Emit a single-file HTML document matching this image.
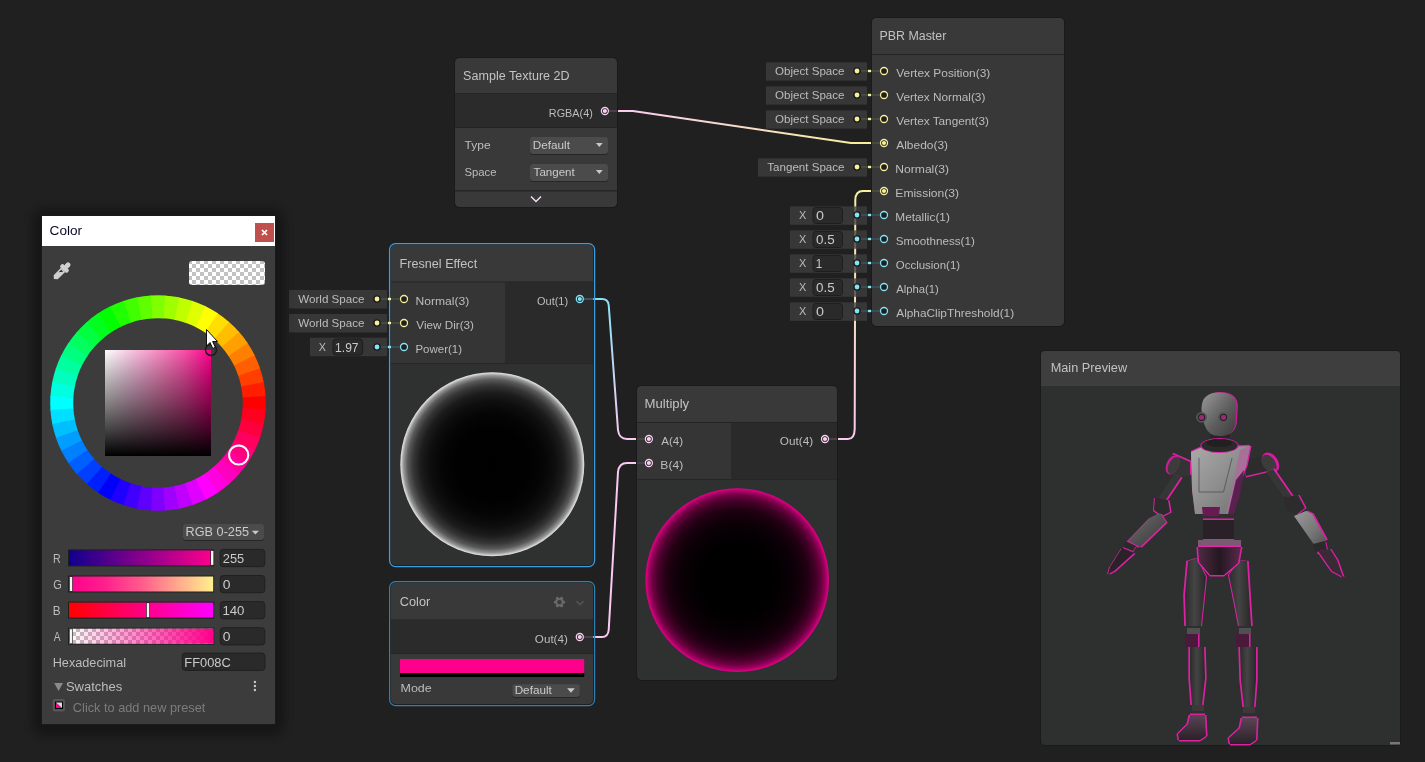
<!DOCTYPE html>
<html><head><meta charset="utf-8"><style>
html,body{margin:0;padding:0;background:#202020;width:1425px;height:762px;overflow:hidden;}
body{position:relative;font-family:"Liberation Sans", sans-serif;}
</style></head><body>
<svg width="1425" height="762" viewBox="0 0 1425 762" font-family='"Liberation Sans", sans-serif' style="position:absolute;left:0;top:0;will-change:transform">
<defs>
<pattern id="chk4" width="8" height="8" patternUnits="userSpaceOnUse"><rect width="8" height="8" fill="#ffffff"/><rect width="4" height="4" fill="#c2c2c2"/><rect x="4" y="4" width="4" height="4" fill="#c2c2c2"/></pattern>
<radialGradient id="fres" cx="0.5" cy="0.5" r="0.5">
<stop offset="0" stop-color="#000"/><stop offset="0.4" stop-color="#010101"/><stop offset="0.55" stop-color="#050505"/><stop offset="0.68" stop-color="#0e0e0e"/>
<stop offset="0.78" stop-color="#1c1c1c"/><stop offset="0.86" stop-color="#363636"/><stop offset="0.92" stop-color="#5a5a5a"/><stop offset="0.965" stop-color="#959595"/>
<stop offset="0.99" stop-color="#d4d4d4"/><stop offset="1" stop-color="#e4e4e4"/></radialGradient>
<radialGradient id="mult" cx="0.5" cy="0.5" r="0.5">
<stop offset="0" stop-color="#000"/><stop offset="0.4" stop-color="#010001"/><stop offset="0.55" stop-color="#070004"/><stop offset="0.68" stop-color="#12000a"/>
<stop offset="0.78" stop-color="#240014"/><stop offset="0.86" stop-color="#440028"/><stop offset="0.92" stop-color="#6c0040"/><stop offset="0.965" stop-color="#a00060"/>
<stop offset="0.99" stop-color="#d4007c"/><stop offset="1" stop-color="#e0008a"/></radialGradient>
<linearGradient id="svw" x1="0" y1="0" x2="1" y2="0"><stop offset="0" stop-color="#fff"/><stop offset="0.25" stop-color="#f6c4e2"/><stop offset="0.5" stop-color="#f68cc2"/><stop offset="0.75" stop-color="#f850a8"/><stop offset="1" stop-color="#ff008c"/></linearGradient>
<linearGradient id="svb" x1="0" y1="0" x2="0" y2="1"><stop offset="0" stop-color="#000" stop-opacity="0"/><stop offset="0.1" stop-color="#000" stop-opacity="0.1"/><stop offset="0.25" stop-color="#000" stop-opacity="0.25"/><stop offset="0.5" stop-color="#000" stop-opacity="0.48"/><stop offset="0.75" stop-color="#000" stop-opacity="0.73"/><stop offset="1" stop-color="#000" stop-opacity="1"/></linearGradient>
<linearGradient id="slR" x1="0" y1="0" x2="1" y2="0"><stop offset="0" stop-color="#10008c"/><stop offset="1" stop-color="#ff008c"/></linearGradient>
<linearGradient id="slG" x1="0" y1="0" x2="1" y2="0"><stop offset="0" stop-color="#ff008c"/><stop offset="0.25" stop-color="#ff208c"/><stop offset="0.5" stop-color="#ff5a8c"/><stop offset="0.75" stop-color="#ffa88c"/><stop offset="1" stop-color="#fff08c"/></linearGradient>
<linearGradient id="slB" x1="0" y1="0" x2="1" y2="0"><stop offset="0" stop-color="#ff0000"/><stop offset="1" stop-color="#ff00ff"/></linearGradient>
<linearGradient id="slA" x1="0" y1="0" x2="1" y2="0"><stop offset="0" stop-color="#ff008c" stop-opacity="0"/><stop offset="1" stop-color="#ff008c" stop-opacity="1"/></linearGradient>
<linearGradient id="w1" gradientUnits="userSpaceOnUse" x1="618" y1="0" x2="871" y2="0"><stop offset="0" stop-color="#fbc9f4"/><stop offset="1" stop-color="#f6f09a"/></linearGradient>
<linearGradient id="w2" gradientUnits="userSpaceOnUse" x1="0" y1="299" x2="0" y2="439"><stop offset="0" stop-color="#84e4f7"/><stop offset="1" stop-color="#fbc9f4"/></linearGradient>
<linearGradient id="w4" gradientUnits="userSpaceOnUse" x1="0" y1="439" x2="0" y2="191"><stop offset="0" stop-color="#fbc9f4"/><stop offset="1" stop-color="#f6f09a"/></linearGradient>
<filter id="shadow" x="-20%" y="-20%" width="140%" height="140%"><feGaussianBlur stdDeviation="5"/></filter>
</defs>
<rect x="0" y="0" width="1425" height="762" rx="0" fill="#202020" />
<g fill="none" stroke-width="2" stroke-linecap="round" stroke-linejoin="round">
<path d="M618 111 L633 111 L851 143 L871 143" stroke="url(#w1)"/>
<path d="M594 299 L602 299 Q608 299 608.7 305 L618 430 Q619 439 627 439 L637 439" stroke="url(#w2)"/>
<path d="M594 637 L602 637 Q608 637 608.7 630 L618 472 Q619 463 627 463 L637 463" stroke="#fbc9f4"/>
<path d="M838 439 L848 439 Q854.5 439 854.7 429 L855.3 200 Q855.5 191 863 191 L871 191" stroke="url(#w4)"/>
</g>
<rect x="454" y="57" width="164" height="151" rx="5" fill="#1a1a1a" />
<clipPath id="cpST"><rect x="455" y="58" width="162" height="149" rx="4.5"/></clipPath>
<g clip-path="url(#cpST)">
<rect x="455" y="58" width="162" height="149" rx="0" fill="#393939" />
<rect x="455" y="93" width="162" height="1" rx="0" fill="#242424" />
<rect x="455" y="94" width="162" height="34" rx="0" fill="#2b2b2b" />
<rect x="455" y="127" width="162" height="1" rx="0" fill="#242424" />
<rect x="455" y="190" width="162" height="1.5" rx="0" fill="#262626" />
</g>
<text x="463.14" y="80" font-size="12.3" fill="#c2c2c2" textLength="106.44" lengthAdjust="spacingAndGlyphs">Sample Texture 2D</text>
<text x="548.83" y="117" font-size="11.5" fill="#bcbcbc" textLength="44.03" lengthAdjust="spacingAndGlyphs">RGBA(4)</text>
<circle cx="604.9" cy="111" r="3.5" fill="#1f1f1f" stroke="#f8d0f2" stroke-width="1.3"/>
<circle cx="604.9" cy="111" r="2.1" fill="#f8d0f2"/>
<path d="M609 111 L617 111" stroke="#4a4048" stroke-width="2"/>
<text x="464.60" y="149" font-size="11.5" fill="#bcbcbc" textLength="25.98" lengthAdjust="spacingAndGlyphs">Type</text>
<text x="464.39" y="175.6" font-size="11.5" fill="#bcbcbc" textLength="32.13" lengthAdjust="spacingAndGlyphs">Space</text>
<rect x="530" y="138" width="78" height="17" rx="3" fill="#262626" />
<rect x="530" y="137" width="78" height="17" rx="3" fill="#4b4b4b" />
<path d="M595.9 143.1 L602.7 143.1 L599.3 147.1 Z" fill="#c8c8c8"/>
<rect x="530" y="165" width="78" height="17" rx="3" fill="#262626" />
<rect x="530" y="164" width="78" height="17" rx="3" fill="#4b4b4b" />
<path d="M595.9 170.1 L602.7 170.1 L599.3 174.1 Z" fill="#c8c8c8"/>
<text x="532.66" y="149" font-size="11.5" fill="#cacaca" textLength="37.24" lengthAdjust="spacingAndGlyphs">Default</text>
<text x="533.61" y="175.6" font-size="11.5" fill="#cacaca" textLength="41.09" lengthAdjust="spacingAndGlyphs">Tangent</text>
<path d="M531 196.5 L536 201.5 L541 196.5" fill="none" stroke="#f0dff0" stroke-width="1.5"/>
<rect x="871" y="17" width="194" height="310" rx="5" fill="#1a1a1a" />
<clipPath id="cpPBR"><rect x="872" y="18" width="192" height="308" rx="4.5"/></clipPath>
<g clip-path="url(#cpPBR)">
<rect x="872" y="18" width="192" height="308" rx="0" fill="#383838" />
<rect x="872" y="18" width="192" height="36" rx="0" fill="#393939" />
<rect x="872" y="54" width="192" height="1" rx="0" fill="#232323" />
</g>
<text x="879.51" y="40.1" font-size="12.3" fill="#c2c2c2" textLength="66.84" lengthAdjust="spacingAndGlyphs">PBR Master</text>
<text x="896.24" y="77" font-size="11.5" fill="#bcbcbc" textLength="94.01" lengthAdjust="spacingAndGlyphs">Vertex Position(3)</text>
<rect x="766" y="62.4" width="101" height="18.2" rx="0" fill="#3e3e3e" fill-opacity="0.78"/>
<text x="774.98" y="75" font-size="11.5" fill="#bcbcbc" textLength="69.58" lengthAdjust="spacingAndGlyphs">Object Space</text>
<circle cx="857" cy="71" r="3.8" fill="#1c1c1c"/><circle cx="857" cy="71" r="2.4" fill="#f6f09a"/>
<path d="M861 71 L880 71" stroke="#4a5244" stroke-width="1.5"/>
<rect x="868" y="69.8" width="3" height="2.4" rx="0" fill="#f6f09a" />
<circle cx="884" cy="71" r="3.5" fill="#1f1f1f" stroke="#f6f09a" stroke-width="1.3"/>
<text x="896.24" y="101" font-size="11.5" fill="#bcbcbc" textLength="89.10" lengthAdjust="spacingAndGlyphs">Vertex Normal(3)</text>
<rect x="766" y="86.4" width="101" height="18.2" rx="0" fill="#3e3e3e" fill-opacity="0.78"/>
<text x="774.98" y="99" font-size="11.5" fill="#bcbcbc" textLength="69.58" lengthAdjust="spacingAndGlyphs">Object Space</text>
<circle cx="857" cy="95" r="3.8" fill="#1c1c1c"/><circle cx="857" cy="95" r="2.4" fill="#f6f09a"/>
<path d="M861 95 L880 95" stroke="#4a5244" stroke-width="1.5"/>
<rect x="868" y="93.8" width="3" height="2.4" rx="0" fill="#f6f09a" />
<circle cx="884" cy="95" r="3.5" fill="#1f1f1f" stroke="#f6f09a" stroke-width="1.3"/>
<text x="896.24" y="125" font-size="11.5" fill="#bcbcbc" textLength="92.77" lengthAdjust="spacingAndGlyphs">Vertex Tangent(3)</text>
<rect x="766" y="110.4" width="101" height="18.2" rx="0" fill="#3e3e3e" fill-opacity="0.78"/>
<text x="774.98" y="123" font-size="11.5" fill="#bcbcbc" textLength="69.58" lengthAdjust="spacingAndGlyphs">Object Space</text>
<circle cx="857" cy="119" r="3.8" fill="#1c1c1c"/><circle cx="857" cy="119" r="2.4" fill="#f6f09a"/>
<path d="M861 119 L880 119" stroke="#4a5244" stroke-width="1.5"/>
<rect x="868" y="117.8" width="3" height="2.4" rx="0" fill="#f6f09a" />
<circle cx="884" cy="119" r="3.5" fill="#1f1f1f" stroke="#f6f09a" stroke-width="1.3"/>
<text x="896.24" y="149" font-size="11.5" fill="#bcbcbc" textLength="51.79" lengthAdjust="spacingAndGlyphs">Albedo(3)</text>
<path d="M872 143 L880 143" stroke="#4a5244" stroke-width="1.5"/>
<circle cx="884" cy="143" r="3.5" fill="#1f1f1f" stroke="#f6f09a" stroke-width="1.3"/>
<circle cx="884" cy="143" r="2.1" fill="#f6f09a"/>
<text x="895.33" y="173" font-size="11.5" fill="#bcbcbc" textLength="53.75" lengthAdjust="spacingAndGlyphs">Normal(3)</text>
<rect x="758" y="158.4" width="109" height="18.2" rx="0" fill="#3e3e3e" fill-opacity="0.78"/>
<text x="767.31" y="171" font-size="11.5" fill="#bcbcbc" textLength="77.23" lengthAdjust="spacingAndGlyphs">Tangent Space</text>
<circle cx="857" cy="167" r="3.8" fill="#1c1c1c"/><circle cx="857" cy="167" r="2.4" fill="#f6f09a"/>
<path d="M861 167 L880 167" stroke="#4a5244" stroke-width="1.5"/>
<rect x="868" y="165.8" width="3" height="2.4" rx="0" fill="#f6f09a" />
<circle cx="884" cy="167" r="3.5" fill="#1f1f1f" stroke="#f6f09a" stroke-width="1.3"/>
<text x="895.33" y="197" font-size="11.5" fill="#bcbcbc" textLength="63.74" lengthAdjust="spacingAndGlyphs">Emission(3)</text>
<path d="M872 191 L880 191" stroke="#4a5244" stroke-width="1.5"/>
<circle cx="884" cy="191" r="3.5" fill="#1f1f1f" stroke="#f6f09a" stroke-width="1.3"/>
<circle cx="884" cy="191" r="2.1" fill="#f6f09a"/>
<text x="895.36" y="221" font-size="11.5" fill="#bcbcbc" textLength="54.48" lengthAdjust="spacingAndGlyphs">Metallic(1)</text>
<rect x="790" y="206.4" width="77" height="18.4" rx="0" fill="#3e3e3e" fill-opacity="0.78"/>
<text x="798.93" y="219" font-size="10.5" fill="#bcbcbc" textLength="7.32" lengthAdjust="spacingAndGlyphs">X</text>
<rect x="813" y="207.5" width="29.5" height="16" rx="3" fill="#2a2a2a" stroke="#1e1e1e" stroke-width="1"/>
<text x="815.93" y="219.8" font-size="12.2" fill="#cacaca" textLength="7.96" lengthAdjust="spacingAndGlyphs">0</text>
<circle cx="857" cy="215" r="3.8" fill="#1c1c1c"/><circle cx="857" cy="215" r="2.4" fill="#84e4f7"/>
<path d="M861 215 L880 215" stroke="#3c5458" stroke-width="1.5"/>
<rect x="868" y="213.8" width="3" height="2.4" rx="0" fill="#84e4f7" />
<circle cx="884" cy="215" r="3.5" fill="#1f1f1f" stroke="#84e4f7" stroke-width="1.3"/>
<text x="895.78" y="245" font-size="11.5" fill="#bcbcbc" textLength="79.04" lengthAdjust="spacingAndGlyphs">Smoothness(1)</text>
<rect x="790" y="230.4" width="77" height="18.4" rx="0" fill="#3e3e3e" fill-opacity="0.78"/>
<text x="798.93" y="243" font-size="10.5" fill="#bcbcbc" textLength="7.32" lengthAdjust="spacingAndGlyphs">X</text>
<rect x="813" y="231.5" width="29.5" height="16" rx="3" fill="#2a2a2a" stroke="#1e1e1e" stroke-width="1"/>
<text x="815.96" y="243.8" font-size="12.2" fill="#cacaca" textLength="18.68" lengthAdjust="spacingAndGlyphs">0.5</text>
<circle cx="857" cy="239" r="3.8" fill="#1c1c1c"/><circle cx="857" cy="239" r="2.4" fill="#84e4f7"/>
<path d="M861 239 L880 239" stroke="#3c5458" stroke-width="1.5"/>
<rect x="868" y="237.8" width="3" height="2.4" rx="0" fill="#84e4f7" />
<circle cx="884" cy="239" r="3.5" fill="#1f1f1f" stroke="#84e4f7" stroke-width="1.3"/>
<text x="895.78" y="269" font-size="11.5" fill="#bcbcbc" textLength="64.34" lengthAdjust="spacingAndGlyphs">Occlusion(1)</text>
<rect x="790" y="254.4" width="77" height="18.4" rx="0" fill="#3e3e3e" fill-opacity="0.78"/>
<text x="798.93" y="267" font-size="10.5" fill="#bcbcbc" textLength="7.32" lengthAdjust="spacingAndGlyphs">X</text>
<rect x="813" y="255.5" width="29.5" height="16" rx="3" fill="#2a2a2a" stroke="#1e1e1e" stroke-width="1"/>
<text x="815.63" y="267.8" font-size="12.2" fill="#cacaca" textLength="6.47" lengthAdjust="spacingAndGlyphs">1</text>
<circle cx="857" cy="263" r="3.8" fill="#1c1c1c"/><circle cx="857" cy="263" r="2.4" fill="#84e4f7"/>
<path d="M861 263 L880 263" stroke="#3c5458" stroke-width="1.5"/>
<rect x="868" y="261.8" width="3" height="2.4" rx="0" fill="#84e4f7" />
<circle cx="884" cy="263" r="3.5" fill="#1f1f1f" stroke="#84e4f7" stroke-width="1.3"/>
<text x="896.24" y="293" font-size="11.5" fill="#bcbcbc" textLength="42.59" lengthAdjust="spacingAndGlyphs">Alpha(1)</text>
<rect x="790" y="278.4" width="77" height="18.4" rx="0" fill="#3e3e3e" fill-opacity="0.78"/>
<text x="798.93" y="291" font-size="10.5" fill="#bcbcbc" textLength="7.32" lengthAdjust="spacingAndGlyphs">X</text>
<rect x="813" y="279.5" width="29.5" height="16" rx="3" fill="#2a2a2a" stroke="#1e1e1e" stroke-width="1"/>
<text x="815.96" y="291.8" font-size="12.2" fill="#cacaca" textLength="18.68" lengthAdjust="spacingAndGlyphs">0.5</text>
<circle cx="857" cy="287" r="3.8" fill="#1c1c1c"/><circle cx="857" cy="287" r="2.4" fill="#84e4f7"/>
<path d="M861 287 L880 287" stroke="#3c5458" stroke-width="1.5"/>
<rect x="868" y="285.8" width="3" height="2.4" rx="0" fill="#84e4f7" />
<circle cx="884" cy="287" r="3.5" fill="#1f1f1f" stroke="#84e4f7" stroke-width="1.3"/>
<text x="896.24" y="317" font-size="11.5" fill="#bcbcbc" textLength="117.93" lengthAdjust="spacingAndGlyphs">AlphaClipThreshold(1)</text>
<rect x="790" y="302.4" width="77" height="18.4" rx="0" fill="#3e3e3e" fill-opacity="0.78"/>
<text x="798.93" y="315" font-size="10.5" fill="#bcbcbc" textLength="7.32" lengthAdjust="spacingAndGlyphs">X</text>
<rect x="813" y="303.5" width="29.5" height="16" rx="3" fill="#2a2a2a" stroke="#1e1e1e" stroke-width="1"/>
<text x="815.93" y="315.8" font-size="12.2" fill="#cacaca" textLength="7.96" lengthAdjust="spacingAndGlyphs">0</text>
<circle cx="857" cy="311" r="3.8" fill="#1c1c1c"/><circle cx="857" cy="311" r="2.4" fill="#84e4f7"/>
<path d="M861 311 L880 311" stroke="#3c5458" stroke-width="1.5"/>
<rect x="868" y="309.8" width="3" height="2.4" rx="0" fill="#84e4f7" />
<circle cx="884" cy="311" r="3.5" fill="#1f1f1f" stroke="#84e4f7" stroke-width="1.3"/>
<rect x="389.6" y="243.6" width="205" height="323" rx="6" fill="none" stroke="#3d9ddc" stroke-width="1.3"/>
<clipPath id="cpFR"><rect x="391" y="245" width="202" height="320" rx="4.5"/></clipPath>
<g clip-path="url(#cpFR)">
<rect x="391" y="245" width="202" height="320" rx="0" fill="#2f3030" />
<rect x="391" y="245" width="202" height="37" rx="0" fill="#393939" />
<rect x="391" y="281.5" width="202" height="1" rx="0" fill="#232323" />
<rect x="391" y="282.5" width="114" height="80.5" rx="0" fill="#353535" />
<rect x="505" y="282.5" width="88" height="80.5" rx="0" fill="#2a2a2a" />
<rect x="391" y="363" width="202" height="1" rx="0" fill="#262626" />
</g>
<text x="399.59" y="268.1" font-size="12.3" fill="#c2c2c2" textLength="77.58" lengthAdjust="spacingAndGlyphs">Fresnel Effect</text>
<text x="415.43" y="305" font-size="11.5" fill="#bcbcbc" textLength="53.75" lengthAdjust="spacingAndGlyphs">Normal(3)</text>
<rect x="289" y="290" width="98" height="18.5" rx="0" fill="#3e3e3e" fill-opacity="0.78"/>
<text x="298.24" y="302.7" font-size="11.5" fill="#bcbcbc" textLength="66.30" lengthAdjust="spacingAndGlyphs">World Space</text>
<circle cx="377" cy="299" r="3.8" fill="#1c1c1c"/><circle cx="377" cy="299" r="2.4" fill="#f6f09a"/>
<path d="M381 299 L400 299" stroke="#4a5244" stroke-width="1.5"/>
<rect x="388" y="297.8" width="3" height="2.4" rx="0" fill="#f6f09a" />
<circle cx="404" cy="299" r="3.5" fill="#1f1f1f" stroke="#f6f09a" stroke-width="1.3"/>
<text x="416.34" y="329" font-size="11.5" fill="#bcbcbc" textLength="57.68" lengthAdjust="spacingAndGlyphs">View Dir(3)</text>
<rect x="289" y="314" width="98" height="18.5" rx="0" fill="#3e3e3e" fill-opacity="0.78"/>
<text x="298.24" y="326.7" font-size="11.5" fill="#bcbcbc" textLength="66.30" lengthAdjust="spacingAndGlyphs">World Space</text>
<circle cx="377" cy="323" r="3.8" fill="#1c1c1c"/><circle cx="377" cy="323" r="2.4" fill="#f6f09a"/>
<path d="M381 323 L400 323" stroke="#4a5244" stroke-width="1.5"/>
<rect x="388" y="321.8" width="3" height="2.4" rx="0" fill="#f6f09a" />
<circle cx="404" cy="323" r="3.5" fill="#1f1f1f" stroke="#f6f09a" stroke-width="1.3"/>
<text x="415.48" y="353" font-size="11.5" fill="#bcbcbc" textLength="46.53" lengthAdjust="spacingAndGlyphs">Power(1)</text>
<rect x="310" y="337.7" width="77" height="18.5" rx="0" fill="#3e3e3e" fill-opacity="0.78"/>
<text x="318.73" y="351" font-size="10.5" fill="#bcbcbc" textLength="7.21" lengthAdjust="spacingAndGlyphs">X</text>
<rect x="333" y="339" width="29.7" height="16" rx="3" fill="#2a2a2a" stroke="#1e1e1e" stroke-width="1"/>
<text x="335.09" y="351.5" font-size="12.2" fill="#cacaca" textLength="23.53" lengthAdjust="spacingAndGlyphs">1.97</text>
<circle cx="377" cy="347" r="3.8" fill="#1c1c1c"/><circle cx="377" cy="347" r="2.4" fill="#84e4f7"/>
<path d="M381 347 L400 347" stroke="#3c5458" stroke-width="1.5"/>
<rect x="388" y="345.8" width="3" height="2.4" rx="0" fill="#84e4f7" />
<circle cx="404" cy="347" r="3.5" fill="#1f1f1f" stroke="#84e4f7" stroke-width="1.3"/>
<text x="537.01" y="305.1" font-size="11.5" fill="#bcbcbc" textLength="31.10" lengthAdjust="spacingAndGlyphs">Out(1)</text>
<circle cx="579.8" cy="299" r="3.5" fill="#1f1f1f" stroke="#84e4f7" stroke-width="1.3"/>
<circle cx="579.8" cy="299" r="2.1" fill="#84e4f7"/>
<path d="M584 299 L593 299" stroke="#3c5458" stroke-width="2"/>
<circle cx="492.3" cy="464.3" r="92" fill="url(#fres)"/>
<rect x="389.6" y="581.6" width="205" height="124" rx="6" fill="none" stroke="#3080b4" stroke-width="1.2"/>
<clipPath id="cpCO"><rect x="391" y="583" width="202" height="121" rx="4.5"/></clipPath>
<g clip-path="url(#cpCO)">
<rect x="391" y="583" width="202" height="121" rx="0" fill="#393939" />
<rect x="391" y="619.5" width="202" height="1" rx="0" fill="#232323" />
<rect x="391" y="620.5" width="202" height="33" rx="0" fill="#2b2b2b" />
<rect x="391" y="653" width="202" height="1" rx="0" fill="#262626" />
</g>
<text x="399.86" y="605.9" font-size="12.3" fill="#c2c2c2" textLength="30.39" lengthAdjust="spacingAndGlyphs">Color</text>
<g transform="translate(559.5 602.1)" fill="#686868"><circle cx="4.10" cy="0.00" r="1.7"/><circle cx="2.05" cy="3.55" r="1.7"/><circle cx="-2.05" cy="3.55" r="1.7"/><circle cx="-4.10" cy="0.00" r="1.7"/><circle cx="-2.05" cy="-3.55" r="1.7"/><circle cx="2.05" cy="-3.55" r="1.7"/><circle r="4.2"/><circle r="2.2" fill="#393939"/></g>
<path d="M576.5 601.2 L580 604.6 L583.5 601.2" fill="none" stroke="#5a5a5a" stroke-width="1.3"/>
<text x="534.88" y="643.1" font-size="11.5" fill="#bcbcbc" textLength="32.97" lengthAdjust="spacingAndGlyphs">Out(4)</text>
<circle cx="579.8" cy="637" r="3.5" fill="#1f1f1f" stroke="#f8d0f2" stroke-width="1.3"/>
<circle cx="579.8" cy="637" r="2.1" fill="#f8d0f2"/>
<path d="M584 637 L593 637" stroke="#4a4048" stroke-width="2"/>
<rect x="400" y="659" width="184.2" height="14" rx="0" fill="#ff008c" />
<rect x="400" y="673" width="184.2" height="4" rx="0" fill="#000" />
<text x="400.50" y="692.2" font-size="11.5" fill="#bcbcbc" textLength="31.18" lengthAdjust="spacingAndGlyphs">Mode</text>
<rect x="512.3" y="685.2" width="67.5" height="12.899999999999977" rx="3" fill="#262626" />
<rect x="512.3" y="684.2" width="67.5" height="12.899999999999977" rx="3" fill="#4b4b4b" />
<path d="M567.1 688.2 L574.8 688.2 L570.95 692.8 Z" fill="#c8c8c8"/>
<text x="514.66" y="693.7" font-size="11.5" fill="#cacaca" textLength="37.14" lengthAdjust="spacingAndGlyphs">Default</text>
<rect x="636" y="385" width="202" height="296" rx="5" fill="#1a1a1a" />
<clipPath id="cpMU"><rect x="637" y="386" width="200" height="294" rx="4.5"/></clipPath>
<g clip-path="url(#cpMU)">
<rect x="637" y="386" width="200" height="294" rx="0" fill="#2f3030" />
<rect x="637" y="386" width="200" height="36" rx="0" fill="#393939" />
<rect x="637" y="422" width="200" height="1" rx="0" fill="#232323" />
<rect x="637" y="423" width="94" height="56" rx="0" fill="#353535" />
<rect x="731" y="423" width="106" height="56" rx="0" fill="#2a2a2a" />
<rect x="637" y="479" width="200" height="1" rx="0" fill="#262626" />
</g>
<text x="644.55" y="408.1" font-size="12.3" fill="#c2c2c2" textLength="44.62" lengthAdjust="spacingAndGlyphs">Multiply</text>
<text x="661.24" y="445" font-size="11.5" fill="#bcbcbc" textLength="21.90" lengthAdjust="spacingAndGlyphs">A(4)</text>
<path d="M637 439 L645 439" stroke="#4a4048" stroke-width="2"/>
<circle cx="648.9" cy="439" r="3.5" fill="#1f1f1f" stroke="#f8d0f2" stroke-width="1.3"/>
<circle cx="648.9" cy="439" r="2.1" fill="#f8d0f2"/>
<text x="660.33" y="469" font-size="11.5" fill="#bcbcbc" textLength="22.84" lengthAdjust="spacingAndGlyphs">B(4)</text>
<path d="M637 463 L645 463" stroke="#4a4048" stroke-width="2"/>
<circle cx="648.9" cy="463" r="3.5" fill="#1f1f1f" stroke="#f8d0f2" stroke-width="1.3"/>
<circle cx="648.9" cy="463" r="2.1" fill="#f8d0f2"/>
<text x="779.87" y="445" font-size="11.5" fill="#bcbcbc" textLength="33.28" lengthAdjust="spacingAndGlyphs">Out(4)</text>
<circle cx="825" cy="439" r="3.5" fill="#1f1f1f" stroke="#f8d0f2" stroke-width="1.3"/>
<circle cx="825" cy="439" r="2.1" fill="#f8d0f2"/>
<path d="M829 439 L837 439" stroke="#4a4048" stroke-width="2"/>
<circle cx="737.2" cy="580.1" r="91.8" fill="url(#mult)"/>
<rect x="1040" y="350" width="361" height="396" rx="5" fill="#1a1a1a" />
<clipPath id="cpMP"><rect x="1041" y="351" width="359" height="394" rx="4"/></clipPath>
<g clip-path="url(#cpMP)">
<rect x="1041" y="351" width="359" height="394" rx="0" fill="#2e2f2f" />
<rect x="1041" y="351" width="359" height="35" rx="0" fill="#3e3e3e" />
</g>
<rect x="1390" y="742" width="10" height="2.5" rx="0" fill="#777" />
<text x="1050.68" y="372" font-size="12.3" fill="#c2c2c2" textLength="76.48" lengthAdjust="spacingAndGlyphs">Main Preview</text>
<g id="robot" stroke-linejoin="round">
<defs>
<linearGradient id="rbLimb" x1="0" y1="0" x2="1" y2="0"><stop offset="0" stop-color="#2c2c2c"/><stop offset="0.45" stop-color="#444"/><stop offset="1" stop-color="#282828"/></linearGradient>
<linearGradient id="rbFore" x1="0" y1="0" x2="1" y2="1"><stop offset="0" stop-color="#747474"/><stop offset="0.5" stop-color="#525252"/><stop offset="1" stop-color="#383838"/></linearGradient>
<linearGradient id="rbForeR" x1="0" y1="0" x2="1" y2="1"><stop offset="0" stop-color="#9a9a9a"/><stop offset="0.6" stop-color="#767676"/><stop offset="1" stop-color="#505050"/></linearGradient>
<linearGradient id="rbChest" x1="0" y1="0" x2="1" y2="1"><stop offset="0" stop-color="#aaaaaa"/><stop offset="0.5" stop-color="#8e8e8e"/><stop offset="1" stop-color="#6e6e6e"/></linearGradient>
<linearGradient id="rbHead" x1="0" y1="0" x2="1" y2="1"><stop offset="0" stop-color="#9a9a9a"/><stop offset="0.55" stop-color="#5e5e5e"/><stop offset="1" stop-color="#3a3a3a"/></linearGradient>
<linearGradient id="rbPelvis" x1="0" y1="0" x2="1" y2="0"><stop offset="0" stop-color="#4e2a44"/><stop offset="0.5" stop-color="#241820"/><stop offset="1" stop-color="#5a2a4e"/></linearGradient>
<linearGradient id="rbFoot" x1="0" y1="0" x2="0" y2="1"><stop offset="0" stop-color="#5a4454"/><stop offset="1" stop-color="#2a2228"/></linearGradient>
</defs>
<path d="M1166 462 L1172 454 L1190 462 L1190 476 L1176 477 L1166 470 Z" fill="#f020b0" fill-opacity="0.9" transform="translate(1.30 -1.30)"/>
<path d="M1166 462 L1172 454 L1190 462 L1190 476 L1176 477 L1166 470 Z" fill="#343434"/>
<ellipse cx="1172.5" cy="465" rx="6" ry="10" transform="rotate(25 1172.5 465)" fill="#e01aa6" opacity="0.9"/>
<ellipse cx="1173.5" cy="465.5" rx="5" ry="9" transform="rotate(25 1173.5 465.5)" fill="#3c3c3c"/>
<path d="M1174 474 L1181 477 L1163 504 L1157 500 Z" fill="#f020b0" fill-opacity="0.9" transform="translate(1.69 0.65)"/>
<path d="M1174 474 L1181 477 L1163 504 L1157 500 Z" fill="#363636"/>
<path d="M1155 497 L1168 500 L1170 512 L1162 516 L1154 510 Z" fill="#f020b0" fill-opacity="0.9" transform="translate(1.69 0.39)"/>
<path d="M1155 497 L1168 500 L1170 512 L1162 516 L1154 510 Z" fill="#f020b0" fill-opacity="0.9" transform="translate(-1.04 1.04)"/>
<path d="M1155 497 L1168 500 L1170 512 L1162 516 L1154 510 Z" fill="#2c2c2c"/>
<path d="M1150 518 L1160 513 L1166 522 L1140 547 L1128 541 Z" fill="#f020b0" fill-opacity="0.9" transform="translate(1.69 0.65)"/>
<path d="M1150 518 L1160 513 L1166 522 L1140 547 L1128 541 Z" fill="#f020b0" fill-opacity="0.9" transform="translate(-1.56 0.78)"/>
<path d="M1150 518 L1160 513 L1166 522 L1140 547 L1128 541 Z" fill="url(#rbFore)"/>
<path d="M1125 541 L1136 546 L1133 551 L1123 547 Z" fill="#f020b0" fill-opacity="0.9" transform="translate(0.00 1.30)"/>
<path d="M1125 541 L1136 546 L1133 551 L1123 547 Z" fill="#2a2a2a"/>
<path d="M1122 548 L1134 553 L1114 571 L1108 574 L1110 567 Z" fill="#f020b0" fill-opacity="0.9" transform="translate(1.56 0.78)"/>
<path d="M1122 548 L1134 553 L1114 571 L1108 574 L1110 567 Z" fill="#f020b0" fill-opacity="0.9" transform="translate(-1.04 0.39)"/>
<path d="M1122 548 L1134 553 L1114 571 L1108 574 L1110 567 Z" fill="#2a2228"/>
<path d="M1243 462 L1262 456 L1272 470 L1246 476 Z" fill="#f020b0" fill-opacity="0.9" transform="translate(0.00 1.56)"/>
<path d="M1243 462 L1262 456 L1272 470 L1246 476 Z" fill="#2c2c2c"/>
<ellipse cx="1270.5" cy="462.5" rx="7.5" ry="11" transform="rotate(-35 1270.5 462.5)" fill="#e01aa6" opacity="0.95"/>
<ellipse cx="1269" cy="463.5" rx="6.3" ry="9.8" transform="rotate(-35 1269 463.5)" fill="#3c3c3c"/>
<path d="M1266 472 L1273 469 L1293 498 L1287 502 Z" fill="#f020b0" fill-opacity="0.9" transform="translate(1.69 -0.65)"/>
<path d="M1266 472 L1273 469 L1293 498 L1287 502 Z" fill="#363636"/>
<path d="M1284 497 L1298 495 L1305 508 L1297 514 L1286 510 Z" fill="#f020b0" fill-opacity="0.9" transform="translate(1.69 0.00)"/>
<path d="M1284 497 L1298 495 L1305 508 L1297 514 L1286 510 Z" fill="#2c2c2c"/>
<path d="M1294 516 L1306 511 L1312 514 L1326 540 L1315 546 Z" fill="#f020b0" fill-opacity="0.9" transform="translate(1.82 -0.52)"/>
<path d="M1294 516 L1306 511 L1312 514 L1326 540 L1315 546 Z" fill="url(#rbForeR)"/>
<path d="M1313 544 L1325 541 L1327 550 L1316 553 Z" fill="#f020b0" fill-opacity="0.9" transform="translate(1.30 1.04)"/>
<path d="M1313 544 L1325 541 L1327 550 L1316 553 Z" fill="#2a2a2a"/>
<path d="M1318 551 L1330 549 L1337 560 L1343 577 L1332 571 Z" fill="#f020b0" fill-opacity="0.9" transform="translate(1.56 0.00)"/>
<path d="M1318 551 L1330 549 L1337 560 L1343 577 L1332 571 Z" fill="#f020b0" fill-opacity="0.9" transform="translate(-1.04 0.65)"/>
<path d="M1318 551 L1330 549 L1337 560 L1343 577 L1332 571 Z" fill="#3a2a36"/>
<path d="M1188 561 L1197 558 L1206 577 L1201 626 L1186 626 L1185 595 Z" fill="#f020b0" fill-opacity="0.9" transform="translate(-1.82 0.00)"/>
<path d="M1188 561 L1197 558 L1206 577 L1201 626 L1186 626 L1185 595 Z" fill="#f020b0" fill-opacity="0.9" transform="translate(1.04 0.00)"/>
<path d="M1188 561 L1197 558 L1206 577 L1201 626 L1186 626 L1185 595 Z" fill="url(#rbLimb)"/>
<path d="M1229 575 L1239 560 L1247 561 L1251 626 L1239 626 L1234 600 Z" fill="#f020b0" fill-opacity="0.9" transform="translate(1.82 0.00)"/>
<path d="M1229 575 L1239 560 L1247 561 L1251 626 L1239 626 L1234 600 Z" fill="#f020b0" fill-opacity="0.9" transform="translate(-1.04 0.00)"/>
<path d="M1229 575 L1239 560 L1247 561 L1251 626 L1239 626 L1234 600 Z" fill="url(#rbLimb)"/>
<path d="M1187 628 L1200 628 L1200 634 L1187 634 Z" fill="#505050"/>
<path d="M1239 628 L1251 628 L1251 634 L1239 634 Z" fill="#505050"/>
<path d="M1185 634 L1198 634 L1198 647 L1185 647 Z" fill="#f020b0" fill-opacity="0.9" transform="translate(1.56 0.00)"/>
<path d="M1185 634 L1198 634 L1198 647 L1185 647 Z" fill="#4a1a3a"/>
<path d="M1236 634 L1249 634 L1249 648 L1236 648 Z" fill="#f020b0" fill-opacity="0.9" transform="translate(1.56 0.00)"/>
<path d="M1236 634 L1249 634 L1249 648 L1236 648 Z" fill="#4a1a3a"/>
<path d="M1190 647 L1204 647 L1205 678 L1202 705 L1192 705 L1190 678 Z" fill="#f020b0" fill-opacity="0.9" transform="translate(1.69 0.00)"/>
<path d="M1190 647 L1204 647 L1205 678 L1202 705 L1192 705 L1190 678 Z" fill="#f020b0" fill-opacity="0.9" transform="translate(-1.69 0.00)"/>
<path d="M1190 647 L1204 647 L1205 678 L1202 705 L1192 705 L1190 678 Z" fill="url(#rbLimb)"/>
<path d="M1240 647 L1256 647 L1256 680 L1254 707 L1244 707 L1241 680 Z" fill="#f020b0" fill-opacity="0.9" transform="translate(1.69 0.00)"/>
<path d="M1240 647 L1256 647 L1256 680 L1254 707 L1244 707 L1241 680 Z" fill="#f020b0" fill-opacity="0.9" transform="translate(-1.69 0.00)"/>
<path d="M1240 647 L1256 647 L1256 680 L1254 707 L1244 707 L1241 680 Z" fill="url(#rbLimb)"/>
<path d="M1192 705 L1204 705 L1204 711 L1192 711 Z" fill="#3a3a3a"/>
<path d="M1243 707 L1255 707 L1255 713 L1243 713 Z" fill="#3a3a3a"/>
<path d="M1190 715 L1205 715 L1206 736 L1200 740 L1179 740 L1178 734 L1188 724 Z" fill="#f020b0" fill-opacity="0.9" transform="translate(1.56 0.00)"/>
<path d="M1190 715 L1205 715 L1206 736 L1200 740 L1179 740 L1178 734 L1188 724 Z" fill="#f020b0" fill-opacity="0.9" transform="translate(-1.56 0.00)"/>
<path d="M1190 715 L1205 715 L1206 736 L1200 740 L1179 740 L1178 734 L1188 724 Z" fill="#f020b0" fill-opacity="0.9" transform="translate(0.00 1.56)"/>
<path d="M1190 715 L1205 715 L1206 736 L1200 740 L1179 740 L1178 734 L1188 724 Z" fill="#f020b0" fill-opacity="0.9" transform="translate(0.00 -1.56)"/>
<path d="M1190 715 L1205 715 L1206 736 L1200 740 L1179 740 L1178 734 L1188 724 Z" fill="url(#rbFoot)"/>
<path d="M1242 718 L1257 718 L1256 740 L1250 744 L1230 744 L1229 738 L1240 728 Z" fill="#f020b0" fill-opacity="0.9" transform="translate(1.56 0.00)"/>
<path d="M1242 718 L1257 718 L1256 740 L1250 744 L1230 744 L1229 738 L1240 728 Z" fill="#f020b0" fill-opacity="0.9" transform="translate(-1.56 0.00)"/>
<path d="M1242 718 L1257 718 L1256 740 L1250 744 L1230 744 L1229 738 L1240 728 Z" fill="#f020b0" fill-opacity="0.9" transform="translate(0.00 1.56)"/>
<path d="M1242 718 L1257 718 L1256 740 L1250 744 L1230 744 L1229 738 L1240 728 Z" fill="#f020b0" fill-opacity="0.9" transform="translate(0.00 -1.56)"/>
<path d="M1242 718 L1257 718 L1256 740 L1250 744 L1230 744 L1229 738 L1240 728 Z" fill="url(#rbFoot)"/>
<path d="M1203 520 L1234 520 L1234 539 L1203 539 Z" fill="#f020b0" fill-opacity="0.9" transform="translate(0.00 1.56)"/>
<path d="M1203 520 L1234 520 L1234 539 L1203 539 Z" fill="#f020b0" fill-opacity="0.9" transform="translate(0.00 -1.56)"/>
<path d="M1203 520 L1234 520 L1234 539 L1203 539 Z" fill="#2a2028"/>
<path d="M1198 540 L1241 540 L1241 547 L1198 547 Z" fill="#7a5a70"/>
<path d="M1198 547 L1241 547 L1238 563 L1224 575 L1210 575 L1199 562 Z" fill="#f020b0" fill-opacity="0.9" transform="translate(1.56 0.00)"/>
<path d="M1198 547 L1241 547 L1238 563 L1224 575 L1210 575 L1199 562 Z" fill="#f020b0" fill-opacity="0.9" transform="translate(-1.56 0.00)"/>
<path d="M1198 547 L1241 547 L1238 563 L1224 575 L1210 575 L1199 562 Z" fill="#f020b0" fill-opacity="0.9" transform="translate(0.00 1.56)"/>
<path d="M1198 547 L1241 547 L1238 563 L1224 575 L1210 575 L1199 562 Z" fill="#f020b0" fill-opacity="0.9" transform="translate(0.00 -1.56)"/>
<path d="M1198 547 L1241 547 L1238 563 L1224 575 L1210 575 L1199 562 Z" fill="url(#rbPelvis)"/>
<path d="M1210 432 L1230 432 L1228 448 L1212 448 Z" fill="#262626"/>
<path d="M1191 452 L1200 448 L1250 446 L1246 466 L1240 480 L1232 514 L1195 514 L1192 490 Z" fill="#f020b0" fill-opacity="0.9" transform="translate(1.56 0.00)"/>
<path d="M1191 452 L1200 448 L1250 446 L1246 466 L1240 480 L1232 514 L1195 514 L1192 490 Z" fill="#f020b0" fill-opacity="0.9" transform="translate(0.00 -1.30)"/>
<path d="M1191 452 L1200 448 L1250 446 L1246 466 L1240 480 L1232 514 L1195 514 L1192 490 Z" fill="url(#rbChest)"/>
<path d="M1240 450 L1250 446 L1246 466 L1240 480 L1232 514 L1226 514 L1234 480 Z" fill="#a87098"/>
<path d="M1236 480 L1244 470 L1240 495 L1234 514 L1228 514 Z" fill="#5a2050"/>
<path d="M1199 458 L1199 492 L1223.5 492 L1232 458" fill="none" stroke="#505050" stroke-width="0.8"/>
<path d="M1202 507 L1220 507 L1219 516 L1203 516 Z" fill="#6a1a52"/>
<ellipse cx="1219.5" cy="445.5" rx="19.2" ry="7.6" fill="#e01aa6" opacity="0.9"/>
<ellipse cx="1219.5" cy="445.5" rx="18" ry="6.6" fill="#2a2a2a"/>
<ellipse cx="1219.5" cy="443" rx="13" ry="4" fill="#202020"/>
<path d="M1201.5 408 Q1202 392.5 1219 392.5 Q1237 392.5 1236.5 408 L1235.5 424 Q1233 436 1220 436 Q1208 436 1205 426 L1202 418 Z" fill="#e01aa6" opacity="0.9" transform="translate(1.3 -0.6)"/>
<path d="M1201.5 408 Q1202 392.5 1219 392.5 Q1237 392.5 1236.5 408 L1235.5 424 Q1233 436 1220 436 Q1208 436 1205 426 L1202 418 Z" fill="url(#rbHead)"/>
<circle cx="1201.5" cy="417.3" r="5.4" fill="#555"/><circle cx="1201.5" cy="417.3" r="3.6" fill="#2a1a26"/><circle cx="1201.5" cy="417.3" r="2.6" fill="#9a2a72"/>
<circle cx="1223.5" cy="417.3" r="5.4" fill="#555"/><circle cx="1223.5" cy="417.3" r="3.6" fill="#2a1a26"/><circle cx="1223.5" cy="417.3" r="2.6" fill="#9a2a72"/>
</g>
<rect x="32" y="208" width="253" height="528" rx="14" fill="#000" opacity="0.3" filter="url(#shadow)"/>
<rect x="41" y="215" width="235" height="510" rx="0" fill="#1a1a1a" />
<rect x="42" y="216" width="233" height="508" rx="0" fill="#3c3c3c" />
<rect x="42" y="216" width="233" height="30" rx="0" fill="#ffffff" />
<text x="49.62" y="235.1" font-size="13.6" fill="#0a0a28" textLength="32.55" lengthAdjust="spacingAndGlyphs">Color</text>
<rect x="255" y="223" width="19" height="19" rx="0" fill="#c0504e" />
<path d="M262 230 L267 235 M267 230 L262 235" stroke="#fff" stroke-width="1.7"/>
<g transform="translate(61.8 271.1) rotate(-45)" fill="#d0d0d0"><path d="M-11.2 0 L-8.6 -2.9 L1.8 -2.9 L1.8 2.9 L-8.6 2.9 Z"/><rect x="1.6" y="-5" width="4.4" height="10" rx="1.8"/><rect x="5" y="-2.4" width="6.2" height="4.8" rx="2.2"/><path d="M-3.2 -1.4 L0.6 -1.4 L0.6 1.4 Z" fill="#2a2a2a"/></g>
<rect x="189" y="261" width="76" height="24" rx="3" fill="url(#chk4)" />
<path d="M265.57 410.05 A107.8 107.8 0 0 0 265.52 395.20 L242.58 396.86 A84.8 84.8 0 0 1 242.62 408.55 Z" fill="#ff0000"/>
<path d="M265.57 395.95 A107.8 107.8 0 0 0 263.58 381.23 L241.05 385.88 A84.8 84.8 0 0 1 242.62 397.45 Z" fill="#ff1f00"/>
<path d="M263.73 381.97 A107.8 107.8 0 0 0 259.83 367.64 L238.11 375.18 A84.8 84.8 0 0 1 241.17 386.46 Z" fill="#ff3f00"/>
<path d="M260.08 368.35 A107.8 107.8 0 0 0 254.35 354.65 L233.79 364.96 A84.8 84.8 0 0 1 238.30 375.74 Z" fill="#ff5f00"/>
<path d="M254.68 355.32 A107.8 107.8 0 0 0 247.21 342.49 L228.18 355.40 A84.8 84.8 0 0 1 234.05 365.49 Z" fill="#ff7f00"/>
<path d="M247.63 343.11 A107.8 107.8 0 0 0 238.55 331.36 L221.36 346.64 A84.8 84.8 0 0 1 228.51 355.89 Z" fill="#ff9f00"/>
<path d="M239.05 331.92 A107.8 107.8 0 0 0 228.51 321.46 L213.47 338.86 A84.8 84.8 0 0 1 221.76 347.09 Z" fill="#ffbf00"/>
<path d="M229.08 321.95 A107.8 107.8 0 0 0 217.26 312.95 L204.62 332.16 A84.8 84.8 0 0 1 213.91 339.24 Z" fill="#ffdf00"/>
<path d="M217.89 313.37 A107.8 107.8 0 0 0 205.00 305.99 L194.97 326.69 A84.8 84.8 0 0 1 205.11 332.49 Z" fill="#ffff00"/>
<path d="M205.68 306.32 A107.8 107.8 0 0 0 191.94 300.68 L184.70 322.51 A84.8 84.8 0 0 1 195.51 326.95 Z" fill="#dfff00"/>
<path d="M192.65 300.92 A107.8 107.8 0 0 0 178.29 297.13 L173.96 319.72 A84.8 84.8 0 0 1 185.26 322.70 Z" fill="#bfff00"/>
<path d="M179.03 297.27 A107.8 107.8 0 0 0 164.30 295.38 L162.96 318.34 A84.8 84.8 0 0 1 174.54 319.83 Z" fill="#9fff00"/>
<path d="M165.05 295.43 A107.8 107.8 0 0 0 150.20 295.48 L151.86 318.42 A84.8 84.8 0 0 1 163.55 318.38 Z" fill="#7fff00"/>
<path d="M150.95 295.43 A107.8 107.8 0 0 0 136.23 297.42 L140.88 319.95 A84.8 84.8 0 0 1 152.45 318.38 Z" fill="#5fff00"/>
<path d="M136.97 297.27 A107.8 107.8 0 0 0 122.64 301.17 L130.18 322.89 A84.8 84.8 0 0 1 141.46 319.83 Z" fill="#3fff00"/>
<path d="M123.35 300.92 A107.8 107.8 0 0 0 109.65 306.65 L119.96 327.21 A84.8 84.8 0 0 1 130.74 322.70 Z" fill="#1fff00"/>
<path d="M110.32 306.32 A107.8 107.8 0 0 0 97.49 313.79 L110.40 332.82 A84.8 84.8 0 0 1 120.49 326.95 Z" fill="#00ff00"/>
<path d="M98.11 313.37 A107.8 107.8 0 0 0 86.36 322.45 L101.64 339.64 A84.8 84.8 0 0 1 110.89 332.49 Z" fill="#00ff1f"/>
<path d="M86.92 321.95 A107.8 107.8 0 0 0 76.46 332.49 L93.86 347.53 A84.8 84.8 0 0 1 102.09 339.24 Z" fill="#00ff3f"/>
<path d="M76.95 331.92 A107.8 107.8 0 0 0 67.95 343.74 L87.16 356.38 A84.8 84.8 0 0 1 94.24 347.09 Z" fill="#00ff5f"/>
<path d="M68.37 343.11 A107.8 107.8 0 0 0 60.99 356.00 L81.69 366.03 A84.8 84.8 0 0 1 87.49 355.89 Z" fill="#00ff7f"/>
<path d="M61.32 355.32 A107.8 107.8 0 0 0 55.68 369.06 L77.51 376.30 A84.8 84.8 0 0 1 81.95 365.49 Z" fill="#00ff9f"/>
<path d="M55.92 368.35 A107.8 107.8 0 0 0 52.13 382.71 L74.72 387.04 A84.8 84.8 0 0 1 77.70 375.74 Z" fill="#00ffbf"/>
<path d="M52.27 381.97 A107.8 107.8 0 0 0 50.38 396.70 L73.34 398.04 A84.8 84.8 0 0 1 74.83 386.46 Z" fill="#00ffdf"/>
<path d="M50.43 395.95 A107.8 107.8 0 0 0 50.48 410.80 L73.42 409.14 A84.8 84.8 0 0 1 73.38 397.45 Z" fill="#00ffff"/>
<path d="M50.43 410.05 A107.8 107.8 0 0 0 52.42 424.77 L74.95 420.12 A84.8 84.8 0 0 1 73.38 408.55 Z" fill="#00dfff"/>
<path d="M52.27 424.03 A107.8 107.8 0 0 0 56.17 438.36 L77.89 430.82 A84.8 84.8 0 0 1 74.83 419.54 Z" fill="#00bfff"/>
<path d="M55.92 437.65 A107.8 107.8 0 0 0 61.65 451.35 L82.21 441.04 A84.8 84.8 0 0 1 77.70 430.26 Z" fill="#009fff"/>
<path d="M61.32 450.68 A107.8 107.8 0 0 0 68.79 463.51 L87.82 450.60 A84.8 84.8 0 0 1 81.95 440.51 Z" fill="#007fff"/>
<path d="M68.37 462.89 A107.8 107.8 0 0 0 77.45 474.64 L94.64 459.36 A84.8 84.8 0 0 1 87.49 450.11 Z" fill="#005fff"/>
<path d="M76.95 474.08 A107.8 107.8 0 0 0 87.49 484.54 L102.53 467.14 A84.8 84.8 0 0 1 94.24 458.91 Z" fill="#003fff"/>
<path d="M86.92 484.05 A107.8 107.8 0 0 0 98.74 493.05 L111.38 473.84 A84.8 84.8 0 0 1 102.09 466.76 Z" fill="#001fff"/>
<path d="M98.11 492.63 A107.8 107.8 0 0 0 111.00 500.01 L121.03 479.31 A84.8 84.8 0 0 1 110.89 473.51 Z" fill="#0000ff"/>
<path d="M110.32 499.68 A107.8 107.8 0 0 0 124.06 505.32 L131.30 483.49 A84.8 84.8 0 0 1 120.49 479.05 Z" fill="#1f00ff"/>
<path d="M123.35 505.08 A107.8 107.8 0 0 0 137.71 508.87 L142.04 486.28 A84.8 84.8 0 0 1 130.74 483.30 Z" fill="#3f00ff"/>
<path d="M136.97 508.73 A107.8 107.8 0 0 0 151.70 510.62 L153.04 487.66 A84.8 84.8 0 0 1 141.46 486.17 Z" fill="#5f00ff"/>
<path d="M150.95 510.57 A107.8 107.8 0 0 0 165.80 510.52 L164.14 487.58 A84.8 84.8 0 0 1 152.45 487.62 Z" fill="#7f00ff"/>
<path d="M165.05 510.57 A107.8 107.8 0 0 0 179.77 508.58 L175.12 486.05 A84.8 84.8 0 0 1 163.55 487.62 Z" fill="#9f00ff"/>
<path d="M179.03 508.73 A107.8 107.8 0 0 0 193.36 504.83 L185.82 483.11 A84.8 84.8 0 0 1 174.54 486.17 Z" fill="#bf00ff"/>
<path d="M192.65 505.08 A107.8 107.8 0 0 0 206.35 499.35 L196.04 478.79 A84.8 84.8 0 0 1 185.26 483.30 Z" fill="#df00ff"/>
<path d="M205.68 499.68 A107.8 107.8 0 0 0 218.51 492.21 L205.60 473.18 A84.8 84.8 0 0 1 195.51 479.05 Z" fill="#ff00ff"/>
<path d="M217.89 492.63 A107.8 107.8 0 0 0 229.64 483.55 L214.36 466.36 A84.8 84.8 0 0 1 205.11 473.51 Z" fill="#ff00df"/>
<path d="M229.08 484.05 A107.8 107.8 0 0 0 239.54 473.51 L222.14 458.47 A84.8 84.8 0 0 1 213.91 466.76 Z" fill="#ff00bf"/>
<path d="M239.05 474.08 A107.8 107.8 0 0 0 248.05 462.26 L228.84 449.62 A84.8 84.8 0 0 1 221.76 458.91 Z" fill="#ff009f"/>
<path d="M247.63 462.89 A107.8 107.8 0 0 0 255.01 450.00 L234.31 439.97 A84.8 84.8 0 0 1 228.51 450.11 Z" fill="#ff007f"/>
<path d="M254.68 450.68 A107.8 107.8 0 0 0 260.32 436.94 L238.49 429.70 A84.8 84.8 0 0 1 234.05 440.51 Z" fill="#ff005f"/>
<path d="M260.08 437.65 A107.8 107.8 0 0 0 263.87 423.29 L241.28 418.96 A84.8 84.8 0 0 1 238.30 430.26 Z" fill="#ff003f"/>
<path d="M263.73 424.03 A107.8 107.8 0 0 0 265.62 409.30 L242.66 407.96 A84.8 84.8 0 0 1 241.17 419.54 Z" fill="#ff001f"/>
<rect x="105" y="350" width="106" height="106" rx="0" fill="url(#svw)" />
<rect x="105" y="350" width="106" height="106" rx="0" fill="url(#svb)" />
<circle cx="211" cy="350" r="5.5" fill="none" stroke="#1c1c1c" stroke-width="1.5"/>
<circle cx="238.7" cy="455" r="9.6" fill="none" stroke="#fff" stroke-width="2"/>
<path d="M206.5 329.5 L206.5 346 L210 342.5 L212.8 348.5 L215.3 347.3 L212.6 341.5 L217.5 341.5 Z" fill="#fff" stroke="#000" stroke-width="0.9"/>
<rect x="183" y="525" width="81" height="16" rx="3" fill="#262626" />
<rect x="183" y="524" width="81" height="16" rx="3" fill="#4b4b4b" />
<path d="M251.8 530.7 L259 530.7 L255.4 534.4 Z" fill="#c8c8c8"/>
<text x="185.59" y="535.9" font-size="12.2" fill="#cacaca" textLength="63.45" lengthAdjust="spacingAndGlyphs">RGB 0-255</text>
<rect x="68" y="549.4" width="146.2" height="17" rx="0" fill="#1e1e1e" />
<rect x="69" y="550.4" width="144.2" height="15" rx="0" fill="url(#slR)" />
<rect x="210.39999999999998" y="550.4" width="3.6" height="15" rx="0" fill="#202020" />
<rect x="211.0" y="550.9" width="2.4" height="14" rx="0" fill="#f4f4f4" />
<rect x="220.2" y="549.4" width="44.6" height="17.2" rx="3" fill="#2a2a2a" stroke="#202020" stroke-width="1"/>
<rect x="68" y="575.5" width="146.2" height="17" rx="0" fill="#1e1e1e" />
<rect x="69" y="576.5" width="144.2" height="15" rx="0" fill="url(#slG)" />
<rect x="69.2" y="576.5" width="3.6" height="15" rx="0" fill="#202020" />
<rect x="69.8" y="577.0" width="2.4" height="14" rx="0" fill="#f4f4f4" />
<rect x="220.2" y="575.5" width="44.6" height="17.2" rx="3" fill="#2a2a2a" stroke="#202020" stroke-width="1"/>
<rect x="68" y="601.6" width="146.2" height="17" rx="0" fill="#1e1e1e" />
<rect x="69" y="602.6" width="144.2" height="15" rx="0" fill="url(#slB)" />
<rect x="146.2" y="602.6" width="3.6" height="15" rx="0" fill="#202020" />
<rect x="146.8" y="603.1" width="2.4" height="14" rx="0" fill="#f4f4f4" />
<rect x="220.2" y="601.6" width="44.6" height="17.2" rx="3" fill="#2a2a2a" stroke="#202020" stroke-width="1"/>
<rect x="68" y="627.7" width="146.2" height="17" rx="0" fill="#1e1e1e" />
<rect x="69" y="628.7" width="144.2" height="15" rx="0" fill="url(#chk4)" />
<rect x="69" y="628.7" width="144.2" height="15" rx="0" fill="url(#slA)" />
<rect x="69.2" y="628.7" width="3.6" height="15" rx="0" fill="#202020" />
<rect x="69.8" y="629.2" width="2.4" height="14" rx="0" fill="#f4f4f4" />
<rect x="220.2" y="627.7" width="44.6" height="17.2" rx="3" fill="#2a2a2a" stroke="#202020" stroke-width="1"/>
<text x="52.95" y="562.9" font-size="12.2" fill="#bcbcbc" textLength="7.65" lengthAdjust="spacingAndGlyphs">R</text>
<text x="53.25" y="588.8" font-size="12.2" fill="#bcbcbc" textLength="8.55" lengthAdjust="spacingAndGlyphs">G</text>
<text x="52.86" y="614.6" font-size="12.2" fill="#bcbcbc" textLength="7.85" lengthAdjust="spacingAndGlyphs">B</text>
<text x="53.75" y="640.7" font-size="12.2" fill="#bcbcbc" textLength="6.77" lengthAdjust="spacingAndGlyphs">A</text>
<text x="222.76" y="563.0" font-size="12.2" fill="#cacaca" textLength="21.40" lengthAdjust="spacingAndGlyphs">255</text>
<text x="222.84" y="588.9" font-size="12.2" fill="#cacaca" textLength="7.73" lengthAdjust="spacingAndGlyphs">0</text>
<text x="222.41" y="614.7" font-size="12.2" fill="#cacaca" textLength="22.07" lengthAdjust="spacingAndGlyphs">140</text>
<text x="222.84" y="640.8000000000001" font-size="12.2" fill="#cacaca" textLength="7.73" lengthAdjust="spacingAndGlyphs">0</text>
<text x="52.68" y="666.7" font-size="12.2" fill="#bcbcbc" textLength="73.35" lengthAdjust="spacingAndGlyphs">Hexadecimal</text>
<rect x="182.3" y="653.1" width="82.6" height="17.3" rx="3" fill="#2a2a2a" stroke="#202020" stroke-width="1"/>
<text x="184.37" y="666.7" font-size="12.2" fill="#cacaca" textLength="46.37" lengthAdjust="spacingAndGlyphs">FF008C</text>
<path d="M54.2 682.9 L63 682.9 L58.6 690.9 Z" fill="#8a8a8a"/>
<text x="65.92" y="690.9" font-size="12.2" fill="#bcbcbc" textLength="56.35" lengthAdjust="spacingAndGlyphs">Swatches</text>
<circle cx="254.9" cy="682" r="1.2" fill="#c8c8c8"/><circle cx="254.9" cy="686" r="1.2" fill="#c8c8c8"/><circle cx="254.9" cy="690" r="1.2" fill="#c8c8c8"/>
<rect x="52.6" y="699.1" width="12.4" height="12.3" rx="2" fill="#555" />
<rect x="55" y="701.5" width="8" height="7.5" rx="0" fill="#000" />
<path d="M56 702.5 L62 708 L56 708 Z" fill="#ff008c"/><path d="M56 702.5 L62 702.5 L62 708 Z" fill="#ddd"/>
<text x="72.86" y="711.8" font-size="12.2" fill="#7c7c7c" textLength="132.45" lengthAdjust="spacingAndGlyphs">Click to add new preset</text>
</svg>
</body></html>
